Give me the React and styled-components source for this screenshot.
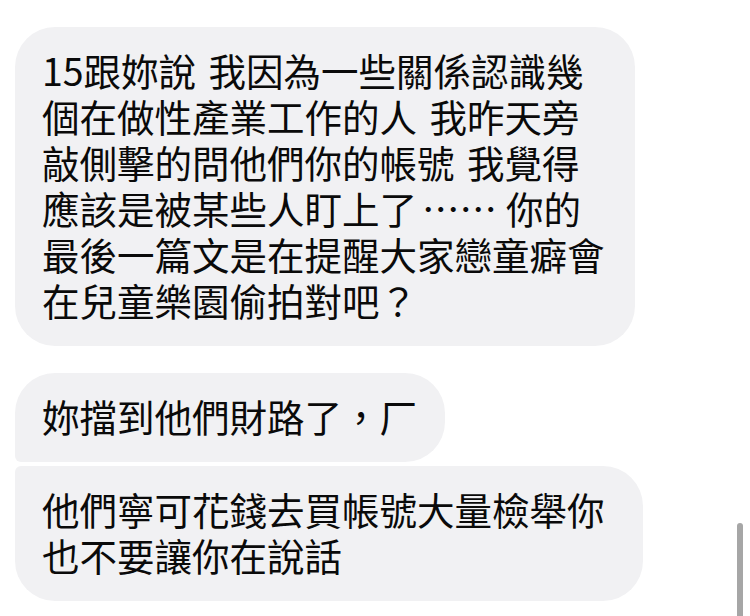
import React from "react";
import styled, { createGlobalStyle } from "styled-components";

const GlobalStyle = createGlobalStyle`
  html, body {
    margin: 0;
    padding: 0;
    background: #ffffff;
  }
  body {
    width: 750px;
    height: 616px;
    overflow: hidden;
  }
`;

const Screen = styled.div`
  position: relative;
  width: 750px;
  height: 616px;
  background: #ffffff;
  overflow: hidden;
`;

const Thread = styled.div`
  display: flex;
  flex-direction: column;
  align-items: flex-start;
  padding: 27px 0 0 15px;
`;

const Group = styled.div`
  display: flex;
  flex-direction: column;
  align-items: flex-start;
  gap: 4px;
  margin-bottom: 27px;
`;

const Bubble = styled.div`
  box-sizing: border-box;
  width: ${(p) => p.$width}px;
  padding: 20px 0 23px 27px;
  background: #f1f1f3;
  color: #0a0a0a;
  font-family: "Noto Sans CJK TC", "Noto Sans CJK SC", "Noto Sans", sans-serif;
  font-size: 37.5px;
  font-weight: 400;
  line-height: 46px;
  word-spacing: 4px;
  border-radius: ${(p) => (p.$top ? "6px" : "40px")} 40px 40px
    ${(p) => (p.$bottom ? "6px" : "40px")};
`;

const Line = styled.div`
  white-space: nowrap;
`;

const Dots = styled.span`
  margin: 0 9px 0 5px;
`;

const Scrollbar = styled.div`
  position: absolute;
  left: 737px;
  top: 523px;
  width: 6px;
  height: 110px;
  border-radius: 3px;
  background: #a6a6a6;
`;

function App() {
  return (
    <Screen>
      <GlobalStyle />
      <Thread>
        <Group>
          <Bubble $width={620}>
            <Line>15跟妳說 我因為一些關係認識幾</Line>
            <Line>個在做性產業工作的人 我昨天旁</Line>
            <Line>敲側擊的問他們你的帳號 我覺得</Line>
            <Line>應該是被某些人盯上了<Dots>……</Dots>你的</Line>
            <Line>最後一篇文是在提醒大家戀童癖會</Line>
            <Line>在兒童樂園偷拍對吧？</Line>
          </Bubble>
        </Group>
        <Group>
          <Bubble $width={430} $bottom>
            <Line>妳擋到他們財路了，厂</Line>
          </Bubble>
          <Bubble $width={628} $top>
            <Line>他們寧可花錢去買帳號大量檢舉你</Line>
            <Line>也不要讓你在說話</Line>
          </Bubble>
        </Group>
      </Thread>
      <Scrollbar />
    </Screen>
  );
}

export default App;
